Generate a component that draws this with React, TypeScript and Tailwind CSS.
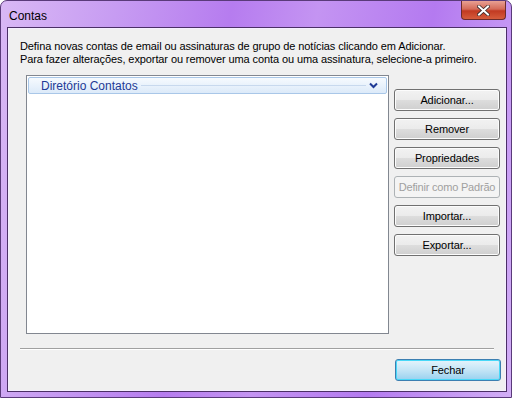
import React from "react";

const font = { fontFamily: '"Segoe UI", "Liberation Sans", Arial, sans-serif' };

function Btn({ label, disabled, primary }: { label: string; disabled?: boolean; primary?: boolean }) {
  if (primary) {
    return (
      <div className="w-[106px] h-[22px] rounded-[3px] border border-[#3c7fb1] bg-gradient-to-b from-[#e5f4fc] via-[#c4e5f6] to-[#98d1ef] flex items-center justify-center text-[11px] tracking-[-0.1px] whitespace-nowrap text-black shadow-[inset_0_0_0_1px_#48d8f8]">
        {label}
      </div>
    );
  }
  if (disabled) {
    return (
      <div className="w-[106px] h-[22px] rounded-[3px] border border-[#adb2b5] bg-[#f4f4f4] flex items-center justify-center text-[11px] tracking-[-0.2px] whitespace-nowrap text-[#a0a0a0]">
        {label}
      </div>
    );
  }
  return (
    <div className="w-[106px] h-[22px] rounded-[3px] border border-[#707070] bg-[linear-gradient(to_bottom,#f2f2f2_0%,#ebebeb_50%,#dddddd_51%,#cfcfcf_100%)] flex items-center justify-center text-[11px] tracking-[-0.1px] whitespace-nowrap text-black shadow-[inset_0_0_0_1px_#fcfcfc]">
      {label}
    </div>
  );
}

export default function App() {
  return (
    <div
      className="w-[512px] h-[398px] rounded-t-[7px] border border-[#5a3a7a] bg-[linear-gradient(100deg,#d9b8f5_0%,#c79cf2_20%,#b67cef_40%,#c494f2_55%,#b47af0_75%,#d2aef6_100%)] flex flex-col overflow-hidden"
      style={font}
    >
      <div className="h-[27px] flex items-start justify-between shrink-0">
        <div className="pl-[8px] pt-[6px] text-[12px] text-black">Contas</div>
        <div className="mr-[5px] w-[45px] h-[19px] rounded-b-[4px] border border-t-0 border-[#6b2c2c] bg-[linear-gradient(to_bottom,#e8a093_0%,#d46a58_45%,#c23a22_55%,#d65c3c_100%)] flex items-center justify-center">
          <svg width="13" height="11" viewBox="0 0 13 11">
            <path d="M2 1.5 L11 9.5 M11 1.5 L2 9.5" stroke="#3a2a2a" strokeWidth="3.6" strokeLinecap="square" />
            <path d="M2 1.5 L11 9.5 M11 1.5 L2 9.5" stroke="#ffffff" strokeWidth="2" strokeLinecap="square" />
          </svg>
        </div>
      </div>
      <div className="ml-[7px] mr-[5px] h-[363px] border border-[#f6efff] shadow-[0_0_0_1px_#4b2f66] bg-[#f0f0f0] flex flex-col">
        <div className="pl-[11px] pt-[11px] text-[11px] tracking-[-0.1px] leading-[13px] text-black whitespace-nowrap">
          <div>Defina novas contas de email ou assinaturas de grupo de notícias clicando em Adicionar.</div>
          <div>Para fazer alterações, exportar ou remover uma conta ou uma assinatura, selecione-a primeiro.</div>
        </div>
        <div className="flex mt-[9px] pl-[17px]">
          <div className="w-[363px] h-[259px] border border-[#828790] bg-white p-[1px]">
            <div className="h-[17px] rounded-[2px] border border-[#a9c7e8] bg-gradient-to-b from-[#f6fafe] to-[#dceaf9] flex items-center pl-[12px] pr-[8px]">
              <span className="text-[12px] text-[#1e3a96]">Diretório Contatos</span>
              <div className="flex-1 h-px bg-[#c8d9ee] mx-[3px]" />
              <svg width="9" height="7" viewBox="0 0 9 7">
                <path d="M1 1.5 L4.5 5 L8 1.5" stroke="#1e3a96" strokeWidth="2" fill="none" />
              </svg>
            </div>
          </div>
          <div className="flex flex-col gap-[7px] ml-[5px] mt-[14px]">
            <Btn label="Adicionar..." />
            <Btn label="Remover" />
            <Btn label="Propriedades" />
            <Btn label="Definir como Padrão" disabled />
            <Btn label="Importar..." />
            <Btn label="Exportar..." />
          </div>
        </div>
        <div className="mx-[11px] mt-[14px] h-px bg-[#a0a0a0] border-b border-white box-content" />
        <div className="flex justify-end pr-[4px] mt-[9px]">
          <Btn label="Fechar" primary />
        </div>
      </div>
    </div>
  );
}
